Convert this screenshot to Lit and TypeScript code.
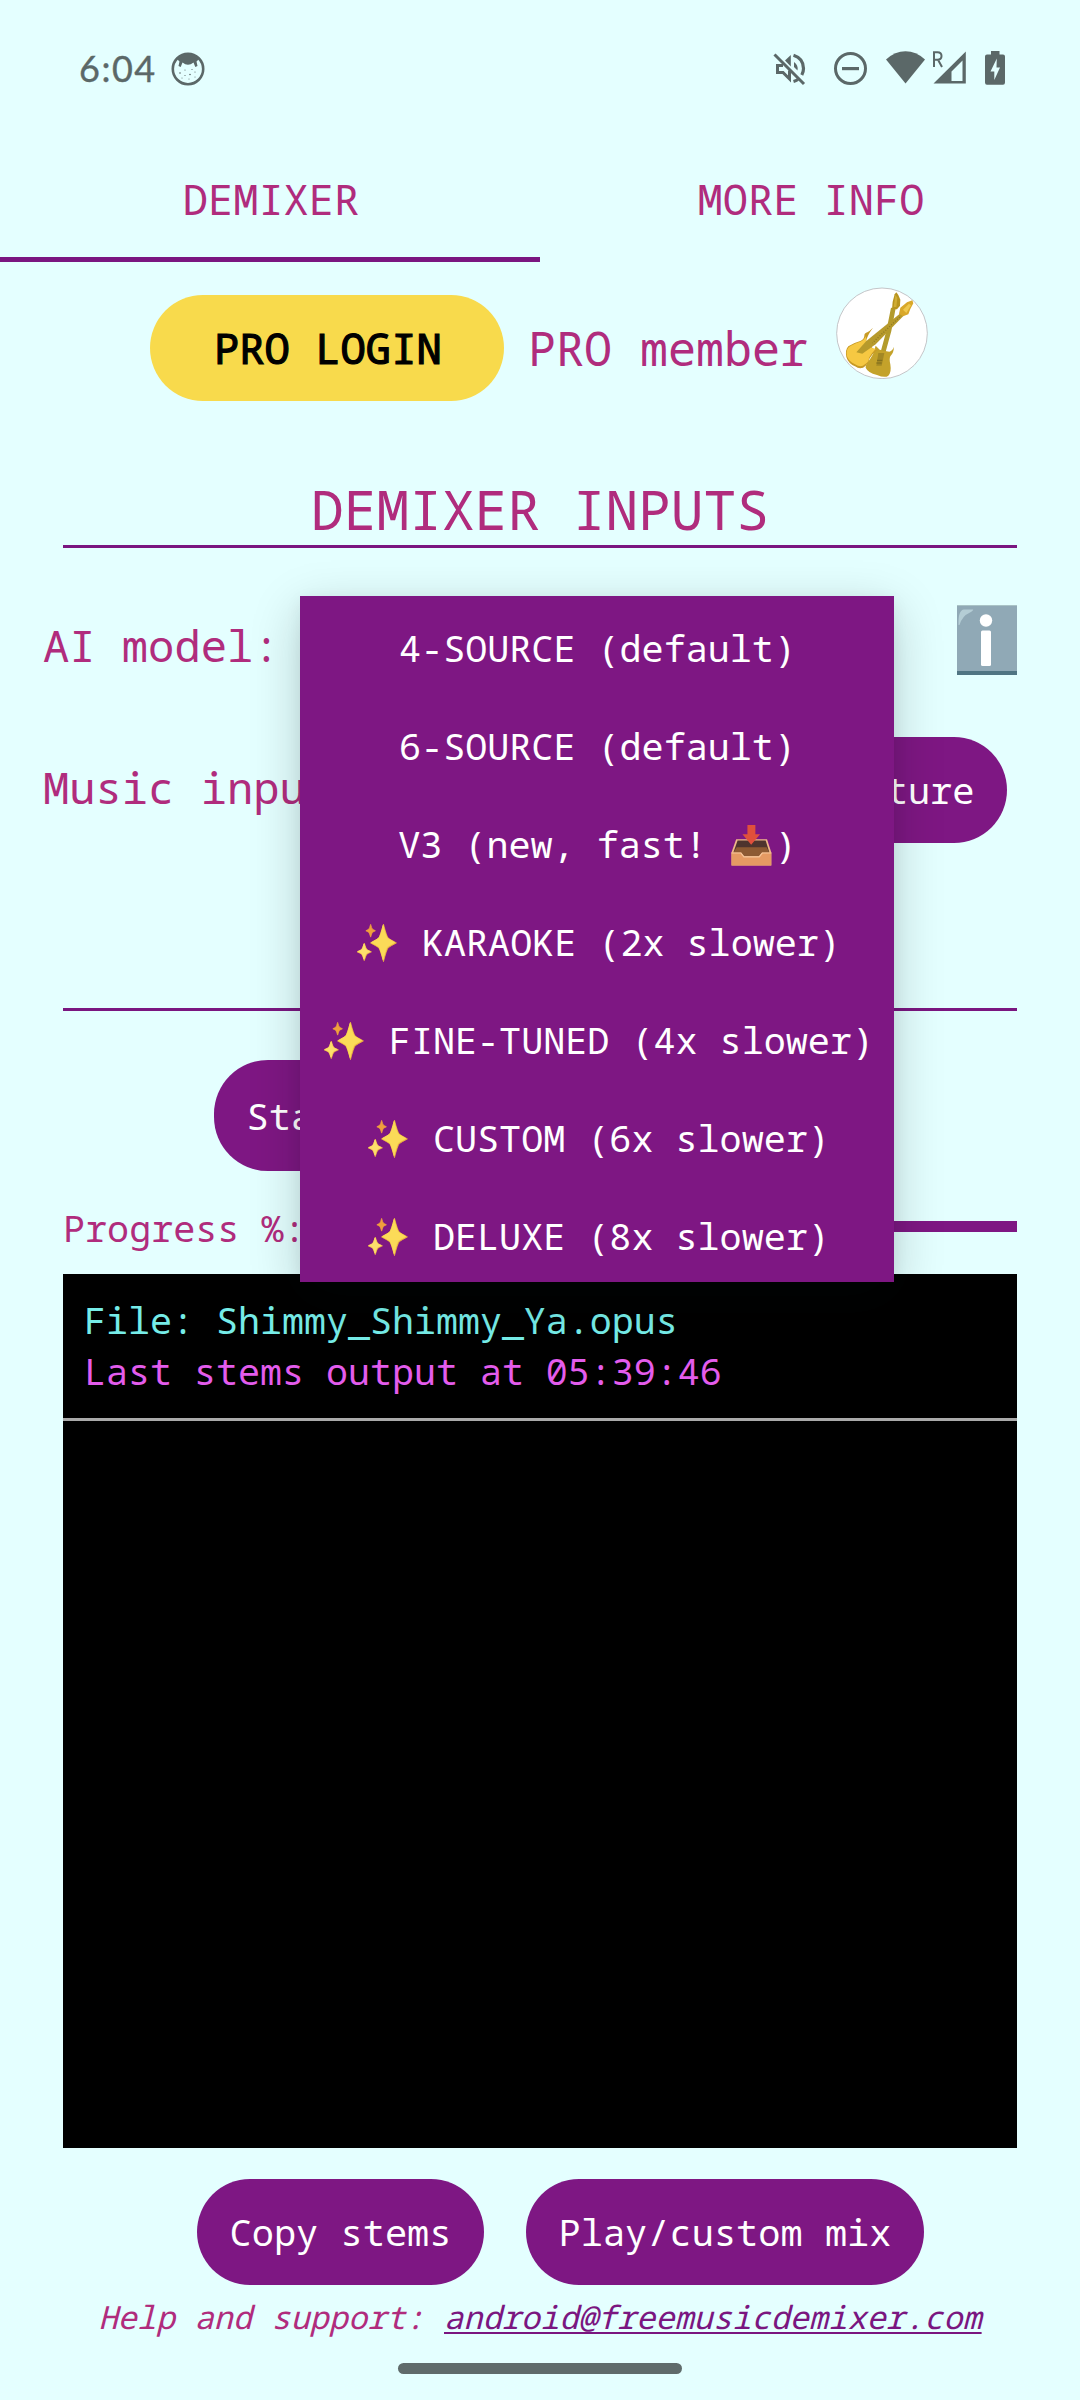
import { LitElement, html, css, svg } from "lit";
import { customElement, state } from "lit/decorators.js";

interface ModelOption {
  before: string;
  after: string;
  icon: "none" | "sparkles" | "inbox";
}

const MODELS: ModelOption[] = [
  { before: "4-SOURCE (default)", after: "", icon: "none" },
  { before: "6-SOURCE (default)", after: "", icon: "none" },
  { before: "V3 (new, fast! ", after: ")", icon: "inbox" },
  { before: "", after: " KARAOKE (2x slower)", icon: "sparkles" },
  { before: "", after: " FINE-TUNED (4x slower)", icon: "sparkles" },
  { before: "", after: " CUSTOM (6x slower)", icon: "sparkles" },
  { before: "", after: " DELUXE (8x slower)", icon: "sparkles" },
];

/** Four-pointed star with concave sides. */
const star = (cx: number, cy: number, rx: number, ry: number, fill: string) => {
  const a = rx * 0.36;
  const b = ry * 0.26;
  return svg`<path fill=${fill} d=${`M${cx} ${cy - ry}Q${cx + a * 0.6} ${cy - b * 1.6} ${cx + a} ${cy - b}Q${cx + a * 1.6} ${cy - b * 0.6} ${cx + rx} ${cy}Q${cx + a * 1.6} ${cy + b * 0.6} ${cx + a} ${cy + b}Q${cx + a * 0.6} ${cy + b * 1.6} ${cx} ${cy + ry}Q${cx - a * 0.6} ${cy + b * 1.6} ${cx - a} ${cy + b}Q${cx - a * 1.6} ${cy + b * 0.6} ${cx - rx} ${cy}Q${cx - a * 1.6} ${cy - b * 0.6} ${cx - a} ${cy - b}Q${cx - a * 0.6} ${cy - b * 1.6} ${cx} ${cy - ry}Z`} stroke=${fill} stroke-width="0.8" stroke-linejoin="round"></path>`;
};

const sparkles = html`<svg class="emoji" viewBox="0 0 46 46">
  ${star(29.6, 23, 13, 18.8, "#efb63e")}
  ${star(29.2, 22.6, 11.8, 17.2, "#fbdb58")}
  ${star(10.3, 32, 7.2, 8.8, "#f3b645")}
  ${star(10.1, 31.7, 6.2, 7.6, "#fddf6c")}
  ${star(16.7, 10.8, 4.8, 6.4, "#f0a03c")}
</svg>`;

const inbox = html`<svg class="emoji" viewBox="0 0 46 46">
  <path d="M7.2 17.3H38.2L42.5 30.7V43.7H2.5V30.7Z" fill="#f0b98a" />
  <path d="M8.6 18.6H36.8L40.6 30.7H4.4Z" fill="#4e342e" />
  <path d="M7.6 25.4L37.8 25.4L40.6 31H33L30 34.5H15L12 31H4.4Z" fill="#8d5a33" />
  <path d="M2.5 30.7H12.2L15.2 34.6H30.2L33.2 30.7H42.5V43.7H2.5Z" fill="#e59a63" />
  <path d="M2.5 31.2H12L15 35H30.4L33.4 31.2H42.5" fill="none" stroke="#f5c59b" stroke-width="1.1" />
  <path d="M18.5 3H26.5V12.2H31.2L22.3 22.8L13.5 12.2H18.5Z" fill="#e0503c" />
</svg>`;

@customElement("status-bar")
class StatusBar extends LitElement {
  static styles = css`
    :host {
      display: flex;
      height: 139px;
      box-sizing: border-box;
      padding: 0 75px 0 79px;
      align-items: flex-start;
      color: #5b6868;
    }
    .time {
      font: 36px/48px Lato, "Noto Sans", sans-serif;
      letter-spacing: 1.5px;
      -webkit-text-stroke: 0.4px #5b6868;
      margin-top: 44px;
      width: 92px;
    }
    .face {
      width: 34px;
      height: 34px;
      margin-top: 52px;
    }
    .right {
      display: block;
      width: 234px;
      height: 38px;
      margin: 49px 0 0 auto;
    }
  `;

  render() {
    return html`
      <span class="time">6:04</span>
      <svg class="face" viewBox="0 0 34 34" fill="#5b6868">
        <circle cx="17" cy="17" r="15.200" fill="none" stroke="#5b6868" stroke-width="2.600" />
        <path d="M6 7Q10 2 17 2T28 7L25.500 9.500L26.500 14L24.300 15L22.500 10.500Q17 15 11.500 10.500L9.700 15L7.500 14L8.500 9.500Z" />
        <circle cx="9" cy="21" r=".8" /><circle cx="14" cy="18" r=".6" />
        <circle cx="19" cy="22.500" r=".8" /><circle cx="14" cy="23.500" r=".6" />
        <circle cx="24" cy="20" r=".6" /><circle cx="21" cy="17.500" r=".6" />
        <circle cx="18" cy="27" r=".5" /><circle cx="11" cy="26" r=".5" />
        <circle cx="24" cy="25" r=".5" />
      </svg>
      <svg class="right" viewBox="771 49 234 38" fill="#5b6868">
        <path d="M774.500 54.500L804 84" stroke="#5b6868" stroke-width="3" />
        <path
          d="M783 65.500H777.500V72.500H783L789.500 79V70.500"
          fill="none" stroke="#5b6868" stroke-width="3"
        />
        <path d="M785 60.500L790.800 55V66.500Z" />
        <path d="M794 62Q798.500 65 797.500 70.500L794 67Z" />
        <path d="M793.500 55.300Q803.500 58.500 803.500 68.500Q803.500 72 801.800 75" fill="none" stroke="#5b6868" stroke-width="3.200" />
        <path d="M793.500 81.500Q796 80.800 798 79.500" fill="none" stroke="#5b6868" stroke-width="3.200" />
        <circle cx="850.500" cy="68.500" r="15" fill="none" stroke="#5b6868" stroke-width="3" />
        <path d="M842 67H859V70.200H842Z" />
        <path d="M886 59.500Q895 51.300 905.500 51.300T925 59.500L905.500 83.500Z" />
        <path
          d="M934 67V52.200H937.500Q941.500 52.200 941.500 56Q941.500 59.700 937.500 59.700H934M938 59.700L942 67"
          fill="none" stroke="#5b6868" stroke-width="2"
        />
        <path fill-rule="evenodd" d="M933.500 83.500L965.800 51.500V83.500ZM951.500 81H962.500V60.500L951.500 71.500Z" />
        <path
          fill-rule="evenodd"
          d="M991 51H999.500V54.500H1003Q1005 54.500 1005 56.500V82.500Q1005 84.700 1003 84.700H987Q985 84.700 985 82.500V56.500Q985 54.500 987 54.500H991ZM996.800 58.500L990.500 71.500H994.300V80L1000 67.500H996.500Z"
        />
      </svg>
    `;
  }
}

@customElement("model-menu")
class ModelMenu extends LitElement {
  static styles = css`
    :host {
      display: block;
      background: #7e1783;
      color: #fff;
      box-shadow: 0 14px 48px rgba(0, 20, 20, 0.2), 0 4px 16px rgba(0, 20, 20, 0.06);
    }
    .option {
      display: flex;
      height: 98px;
      box-sizing: border-box;
      padding: 5px 0 0 1px;
      align-items: center;
      justify-content: center;
      font-size: 36.75px;
      white-space: pre;
    }
    .emoji {
      width: 45.8px;
      height: 45.8px;
      flex: none;
      margin-top: 2px;
    }
  `;

  render() {
    return MODELS.map(
      (m) => html`<div class="option"
        ><span>${m.before}</span
        >${m.icon === "sparkles" ? sparkles : m.icon === "inbox" ? inbox : ""}<span
          >${m.after}</span
        ></div
      >`
    );
  }
}

@customElement("app-root")
class AppRoot extends LitElement {
  @state() private tab = 0;

  static styles = css`
    :host {
      display: block;
      position: relative;
      width: 1080px;
      height: 2400px;
      overflow: hidden;
      background: #e4ffff;
      color: #b02c7d;
      font-family: "Noto Sans Mono", "DejaVu Sans Mono", monospace;
    }
    .page {
      display: flex;
      flex-direction: column;
      white-space: pre;
    }
    .tabs {
      display: flex;
      height: 123px;
    }
    .tab {
      flex: 1;
      text-align: center;
      font-size: 42px;
      line-height: 119px;
      box-sizing: border-box;
      padding-left: 2px;
    }
    .tab.active {
      box-shadow: inset 0 -5px #7a1680;
    }
    .pro {
      display: flex;
      align-items: flex-start;
      height: 215px;
      box-sizing: border-box;
      padding: 33px 0 0 150px;
    }
    .login {
      width: 354px;
      height: 106px;
      box-sizing: border-box;
      padding-left: 64px;
      border-radius: 53px;
      background: #f8da4c;
      color: #000;
      font-size: 42.2px;
      line-height: 105px;
      -webkit-text-stroke: 1.2px #000;
    }
    .member {
      width: 282px;
      margin-left: 24px;
      font-size: 46.7px;
      line-height: 106px;
    }
    .avatar {
      width: 92px;
      height: 92px;
      margin: -8px 0 0 26px;
    }
    .title {
      margin: 0 63px;
      height: 68px;
      border-bottom: 3px solid #7a1680;
      text-align: center;
      font-size: 54.5px;
      line-height: 64px;
    }
    .row {
      display: flex;
      justify-content: space-between;
      margin-left: 43px;
      font-size: 43.8px;
    }
    .model {
      margin-top: 57px;
      margin-right: 63px;
      height: 70px;
      line-height: 81px;
    }
    .input {
      margin-top: 62px;
      margin-right: 73px;
      height: 106px;
      line-height: 101px;
    }
    .info {
      width: 60px;
      height: 70px;
    }
    .button {
      height: 106px;
      box-sizing: border-box;
      padding: 0 32.5px;
      border-radius: 53px;
      background: #7e1783;
      color: #fff;
      font-size: 37px;
      line-height: 105px;
    }
    .divider {
      margin: 165px 63px 0;
      height: 3px;
      background: #7a1680;
    }
    .actions {
      display: flex;
      margin: 49px 0 0 214px;
    }
    .start {
      height: 111px;
      line-height: 111px;
      border-radius: 54px;
    }
    .progress {
      display: flex;
      height: 69px;
      margin: 34px 63px 0 63px;
      gap: 22px;
      font-size: 36.75px;
      line-height: 46px;
    }
    .bar {
      flex: 1;
      height: 11px;
      margin-top: 16px;
      background: #7e1783;
    }
    .console {
      margin: 0 63px;
      height: 874px;
      background: #000;
      font-size: 36.66px;
      line-height: 50.6px;
    }
    .log {
      height: 144px;
      box-sizing: border-box;
      padding: 21px 0 0 21px;
    }
    .rule {
      height: 3px;
      background: #a9a9a9;
    }
    .file {
      color: #76ece8;
    }
    .stems {
      color: #e35cec;
    }
    .footer {
      display: flex;
      gap: 42px;
      margin: 31px 0 0 197px;
    }
    .help {
      text-align: center;
      font-size: 32px;
      font-style: italic;
      line-height: 64px;
      height: 66px;
    }
    .mail {
      color: #7a1680;
      text-decoration: underline;
      text-decoration-thickness: 2px;
      text-underline-offset: 3px;
      text-decoration-skip-ink: none;
    }
    .home {
      width: 284px;
      height: 11px;
      margin: 12px auto 0;
      border-radius: 6px;
      background: #5f6b6b;
    }
    .menu {
      position: absolute;
      left: 300px;
      top: 596px;
      width: 594px;
    }
  `;

  private avatar() {
    return html`<svg class="avatar" viewBox="49 48 276 276">
      <circle cx="187" cy="187" r="136" fill="#fff" stroke="#b9b9bd" stroke-width="2.500" />
      <path d="M228 112L215 180L196 250L182 246L200 180L214 110Z" fill="#b39b2c" />
      <path d="M225 70L230 64L236 72L242 86L241 104L232 115H217L219 92Z" fill="#b8941f" />
      <path d="M227 72L233 80L230 108L222 108Z" fill="#d0ad35" />
      <path
        d="M168 224L180 236L196 240L209 242Q220 238 223 227Q223 244 212 256Q208 264 212 280Q216 304 206 314Q196 322 172 312Q144 304 138 290Q138 278 150 266L160 250Z"
        fill="#c4a22a"
      />
      <path d="M176 246H194L186 284H170Z" fill="#a38824" />
      <path d="M172 268H188M170 276H186" stroke="#7e6c1c" stroke-width="3" />
      <path
        d="M160 170Q150 180 143 184Q134 186 134 194Q134 204 122 210Q100 216 86 226Q76 236 80 258Q86 278 106 286Q124 298 138 284Q148 276 150 262Q158 248 176 234Q160 238 156 228L138 214Q142 194 160 170Z"
        fill="#c79a25"
      />
      <path
        d="M138 196Q134 208 122 212Q98 220 88 228Q78 238 82 256Q88 272 106 280Q124 292 136 280Q148 272 148 260Q156 246 168 234L156 230L140 208Z"
        fill="#f6c842"
      />
      <path d="M246 124L254 132L168 220L128 248L110 244L140 210Z" fill="#b79a2b" />
      <path d="M240 138L158 216" stroke="#8c7a25" stroke-width="4" stroke-dasharray="3 5" />
      <path d="M242 110L262 94L278 88L281 97L272 114L266 130L250 136L238 128Z" fill="#d9a82a" />
      <path d="M250 116L268 98L274 103L260 126Z" fill="#efc84d" />
    </svg>`;
  }

  private info() {
    return html`<svg class="info" viewBox="0 0 60 70">
      <rect width="60" height="70" fill="#90a9b6" />
      <path d="M0 0H60V1H0Z" fill="#a9c3c6" />
      <rect y="66" width="60" height="4" fill="#507583" />
      <path d="M1.500 20Q1 5 7 4.500H16Q17 5 13 7.500Q5 11 2.500 20Z" fill="#b4cdd5" />
      <circle cx="29" cy="15.500" r="6.200" fill="#fff" />
      <rect x="24" y="25.500" width="10" height="35.500" rx="1.500" fill="#fff" />
    </svg>`;
  }

  render() {
    return html`
      <div class="page"
        ><status-bar></status-bar
        ><div class="tabs"
          >${["DEMIXER", "MORE INFO"].map(
            (t, i) =>
              html`<div class="tab ${i === this.tab ? "active" : ""}" @click=${() => (this.tab = i)}>${t}</div>`
          )}</div
        ><div class="pro"
          ><div class="login">PRO LOGIN</div
          ><div class="member">PRO member</div
          >${this.avatar()}</div
        ><div class="title">DEMIXER INPUTS</div
        ><div class="row model"><span>AI model:</span>${this.info()}</div
        ><div class="row input"><span>Music input:</span><div class="button">Capture</div></div
        ><div class="divider"></div
        ><div class="actions"><div class="button start">Start</div></div
        ><div class="progress"><span>Progress %:</span><div class="bar"></div></div
        ><div class="console"
          ><div class="log"
            ><div class="file">File: Shimmy_Shimmy_Ya.opus</div
            ><div class="stems">Last stems output at 05:39:46</div></div
          ><div class="rule"></div></div
        ><div class="footer"
          ><div class="button">Copy stems</div
          ><div class="button">Play/custom mix</div></div
        ><div class="help">Help and support: <span class="mail">android@freemusicdemixer.com</span></div
        ><div class="home"></div
      ></div>
      <model-menu class="menu"></model-menu>
    `;
  }
}
